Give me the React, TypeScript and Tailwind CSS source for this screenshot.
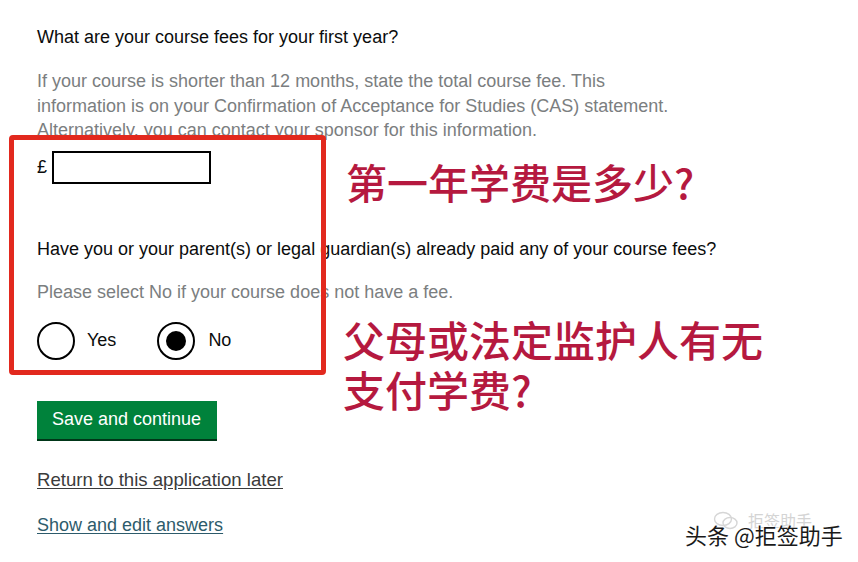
export default function App() {
  const font = { fontFamily: '"Liberation Sans", Arial, sans-serif' }
  const cjk = { fontFamily: '"Noto Sans CJK SC", sans-serif' }
  return (
    <div className="relative h-[562px] w-[858px] overflow-hidden bg-white" style={font}>
      <div className="flex flex-col pl-[37px] pt-[25px]">
        <p className="text-[18px] leading-6 text-[#0b0c0c]">What are your course fees for your first year?</p>
        <p className="mt-[20px] whitespace-nowrap text-[18px] leading-[24.5px] text-[#7b7e80]">
          If your course is shorter than 12 months, state the total course fee. This
          <br />
          information is on your Confirmation of Acceptance for Studies (CAS) statement.
          <br />
          Alternatively, you can contact your sponsor for this information.
        </p>
        <div className="mt-[8px] flex items-center gap-[5px]">
          <span className="text-[18px] text-[#0b0c0c]">£</span>
          <div className="h-[33px] w-[159px] border-2 border-black bg-white" />
        </div>
        <p className="mt-[53px] text-[18px] leading-6 text-[#0b0c0c]">
          Have you or your parent(s) or legal guardian(s) already paid any of your course fees?
        </p>
        <p className="mt-[19px] text-[18px] leading-6 text-[#7b7e80]">
          Please select No if your course does not have a fee.
        </p>
        <div className="mt-[18px] flex items-center">
          <div className="flex items-center gap-[12px]">
            <span className="h-[38px] w-[38px] rounded-full border-2 border-black" />
            <span className="text-[18px] text-[#0b0c0c]">Yes</span>
          </div>
          <div className="ml-[41px] flex items-center gap-[13px]">
            <span className="flex h-[38px] w-[38px] items-center justify-center rounded-full border-2 border-black">
              <span className="h-[20px] w-[20px] rounded-full bg-black" />
            </span>
            <span className="text-[18px] text-[#0b0c0c]">No</span>
          </div>
        </div>
        <button className="mt-[41px] h-[38px] w-[180px] bg-[#00823b] pl-[15px] text-left text-[18px] text-white shadow-[0_2px_0_#003618]">
          Save and continue
        </button>
        <a className="mt-[29px] self-start text-[18.6px] leading-6 text-[#3b3b3b] underline underline-offset-2">
          Return to this application later
        </a>
        <a className="mt-[21px] self-start text-[18px] leading-6 text-[#2d5b6b] underline underline-offset-2">
          Show and edit answers
        </a>
      </div>

      {/* annotation overlay */}
      <div className="absolute left-[9px] top-[135px] h-[240px] w-[317px] rounded-[4px] border-[5px] border-[#e2291e]" />
      <div className="absolute left-[346px] top-[155px] text-[41px] font-medium leading-[52px] text-[#b5193f]" style={cjk}>
        第一年学费是多少?
      </div>
      <div className="absolute left-[343px] top-[314px] text-[42px] font-medium leading-[50px] text-[#b5193f]" style={cjk}>
        <div>父母或法定监护人有无</div>
        <div>支付学费?</div>
      </div>

      {/* watermark */}
      <svg className="absolute left-[713px] top-[511px]" width="26" height="20" viewBox="0 0 26 20" fill="none" stroke="#d6d6d6" strokeWidth="1.4">
        <ellipse cx="10" cy="8" rx="8.5" ry="6.5" />
        <ellipse cx="17" cy="12" rx="7" ry="5.5" />
      </svg>
      <div className="absolute left-[748px] top-[508px] text-[16px] text-[#d4d4d4]" style={cjk}>
        拒签助手
      </div>
      <div
        className="absolute left-[685px] top-[518px] text-[22px] text-[#1a1a1a] [text-shadow:0_0_2px_#fff,0_0_2px_#fff]"
        style={cjk}
      >
        头条 @拒签助手
      </div>
    </div>
  )
}
